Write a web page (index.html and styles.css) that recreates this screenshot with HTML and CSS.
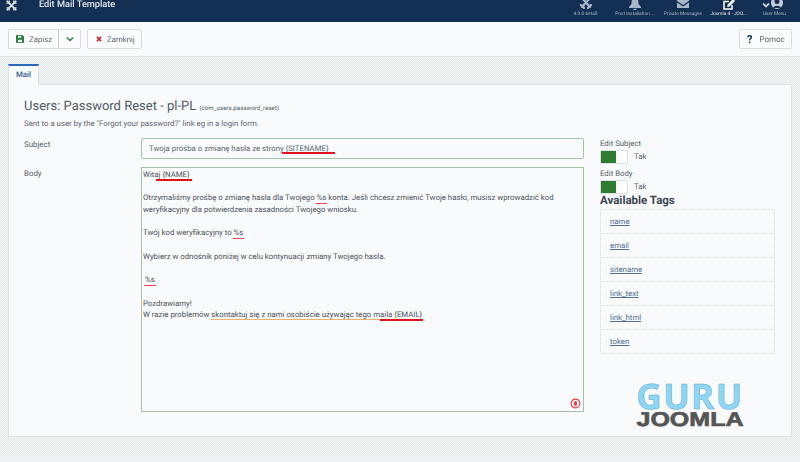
FILE: index.html
```html
<!DOCTYPE html>
<html lang="pl">
<head>
<meta charset="utf-8">
<title>Edit Mail Template</title>
<link rel="stylesheet" href="styles.css">
</head>
<body>
<div class="page">
<header class="topbar">
  <svg class="brand" viewBox="0 0 12 12"><path d="M1.500 1.500l9 9 M10.500 1.500l-9 9" stroke="#d5dde6" stroke-width="2.200" stroke-linecap="round" fill="none"/><path d="M3.500 1v2 M8.500 1v2 M1 3.500h2 M9 3.500h2 M1 8.500h2 M9 8.500h2 M3.500 9v2 M8.500 9v2" stroke="#d5dde6" stroke-width="1.400" stroke-linecap="round"/></svg>
  <h1 class="page-title">Edit Mail Template</h1>
  <nav class="quick">
    <div class="quick-item"><svg class="qi" viewBox="0 0 14 10"><path d="M3 -2l8 9 M11 -2l-8 9 M2 5l3 3 M12 5l-3 3" stroke="#aab7c7" stroke-width="2.200" stroke-linecap="round" fill="none"/></svg><span>4.0.0-beta5</span></div>
    <div class="quick-item"><svg class="qi" viewBox="0 0 14 10"><path d="M4 -2h6l.5 6 2.500 3v1H1V7l2.500-3z" fill="#aab7c7"/><path d="M5.500 8.800h3V10h-3z" fill="#aab7c7"/></svg><span>Post Installation ...</span></div>
    <div class="quick-item"><svg class="qi" viewBox="0 0 14 10"><path d="M1 -2h12v3L7 5 1 1z M1 2.500l6 4 6-4V8H1z" fill="#aab7c7"/></svg><span>Private Messages</span></div>
    <div class="quick-item bright"><svg class="qi" viewBox="0 0 14 10"><path d="M7 1.500H2V9h8V5" stroke="#fff" stroke-width="1.500" fill="none"/><path d="M5 7l.8-2.500L11-1l2 2-5.500 5.500z" fill="#fff"/></svg><span>Joomla 4 - JOO...</span></div>
    <div class="quick-item"><svg class="qi wide" viewBox="0 0 22 10"><path d="M1 3.500l3 3 3-3" stroke="#c3ccd8" stroke-width="1.800" fill="none"/><circle cx="15" cy="3" r="6" fill="#c3ccd8"/><circle cx="15" cy="1.500" r="2.500" fill="#132f53"/><path d="M11 8c1-3 7-3 8 0z" fill="#132f53"/></svg><span>User Menu</span></div>
  </nav>
</header>

<div class="toolbar">
  <div class="btn-group">
    <button class="btn btn-save"><svg class="ico" viewBox="0 0 10 10"><path d="M0 1a1 1 0 0 1 1-1h7l2 2v7a1 1 0 0 1-1 1H1a1 1 0 0 1-1-1z" fill="#2f7d43"/><rect x="2.500" y="1" width="4" height="2.500" fill="#e8f2ea"/><rect x="2.500" y="6" width="5" height="3" fill="#e8f2ea"/></svg>Zapisz</button>
    <button class="btn btn-caret"><svg class="ico" viewBox="0 0 10 8"><path d="M1 2l4 4 4-4" stroke="#2f7d43" stroke-width="1.800" fill="none"/></svg></button>
  </div>
  <button class="btn btn-close"><svg class="ico" viewBox="0 0 10 10"><path d="M1.500 1.500l7 7 M8.500 1.500l-7 7" stroke="#d0232b" stroke-width="2.600" fill="none"/></svg>Zamknij</button>
  <button class="btn btn-help"><span class="q">?</span>Pomoc</button>
</div>

<main class="content">
  <div class="tabs"><div class="tab">Mail</div></div>
  <section class="panel">
    <h2 class="mail-title">Users: Password Reset - pl-PL <small>(com_users.password_reset)</small></h2>
    <p class="desc">Sent to a user by the "Forgot your password?" link eg in a login form.</p>
    <div class="columns">
      <div class="fields">
        <div class="field-row subject-row">
          <label class="field-label">Subject</label>
          <div class="subject-input">Twoja prośba o zmianę hasła ze strony <span class="mark mark-site">{SITENAME}</span></div>
        </div>
        <div class="field-row">
          <label class="field-label">Body</label>
          <div class="body-area">
            <p>Witaj <span class="mark mark-name">{NAME}</span></p>
            <p>Otrzymaliśmy prośbę o zmianę hasła dla Twojego <span class="mark mark-thin">%s</span> konta. Jeśli chcesz zmienić Twoje hasło, musisz wprowadzić kod<br>weryfikacyjny dla potwierdzenia zasadności Twojego wniosku.</p>
            <p>Twój kod weryfikacyjny to <span class="mark mark-thin">%s</span></p>
            <p>Wybierz w odnośnik poniżej w celu kontynuacji zmiany Twojego hasła.</p>
            <p>&nbsp;<span class="mark mark-thin">%s</span></p>
            <p>Pozdrawiamy!<br>W razie problemów <span class="orange">skontaktuj się z nami osobiście używając tego maila</span> <span class="mark mark-mail">{EMAIL}</span></p>
            <svg class="badge" viewBox="0 0 12 12"><circle cx="6" cy="6" r="4.800" stroke="#e8343c" stroke-width="1.200" fill="none"/><rect x="4.500" y="3.500" width="3" height="5" rx="1" fill="#e8343c"/></svg>
          </div>
        </div>
      </div>
      <aside class="side">
        <div class="switch-label">Edit Subject</div>
        <div class="switch-row"><span class="switch"><span class="knob"></span></span><span>Tak</span></div>
        <div class="switch-label second">Edit Body</div>
        <div class="switch-row"><span class="switch"><span class="knob"></span></span><span>Tak</span></div>
        <h3 class="tags-title">Available Tags</h3>
        <ul class="tags">
          <li><a>name</a></li>
          <li><a>email</a></li>
          <li><a>sitename</a></li>
          <li><a>link_text</a></li>
          <li><a>link_html</a></li>
          <li><a>token</a></li>
        </ul>
      </aside>
    </div>
    <div class="logo"><div class="logo-guru">GURU</div><div class="logo-joomla">JOOMLA</div></div>
  </section>
</main>
</div>
</body>
</html>
```
FILE: styles.css
```css
* { box-sizing: border-box; }
html, body { margin: 0; padding: 0; }
body {
  width: 800px; height: 462px; overflow: hidden;
  background: #eceff2;
  font-family: Roboto, "Liberation Sans", sans-serif;
  font-size: 7.800px; color: #4a5560;
  text-rendering: geometricPrecision;
}
.page {
  width: 800px; height: 462px;
  background: repeating-conic-gradient(#e8ebee 0 25%, #f1f3f5 0 50%) 0 0 / 2px 2px;
  filter: blur(.3px);
}
.topbar { height: 22px; background: #132f53; display: flex; align-items: flex-start; }
.brand { width: 11px; height: 11px; margin: 0 0 0 6px; }
.page-title { margin: -1px 0 0 22px; font-size: 9.200px; line-height: 12px; font-weight: 500; color: #e4e9ef; }
.quick { margin-left: auto; display: flex; padding-right: 2px; }
.quick-item { width: 47px; display: flex; flex-direction: column; align-items: center; font-size: 4.800px; color: #a9b6c6; white-space: nowrap; }
.quick-item:nth-child(1) { width: 49px; }
.quick-item:nth-child(2) { width: 50px; }
.quick-item:nth-child(3) { width: 46px; }
.quick-item:nth-child(4) { width: 45px; }
.quick-item span { line-height: 6px; height: 6px; margin-top: 2px; }
.quick-item.bright { color: #e8edf3; }
.qi { width: 14px; height: 10px; display: block; overflow: hidden; }
.qi.wide { width: 22px; margin-left: -4px; }

.toolbar { height: 35px; background: #f9fafc; display: flex; align-items: flex-start; padding: 7px 8px 0; border-bottom: 1px solid #e4e7ea; }
.btn { height: 20px; background: #fbfcfd; border: 1px solid #d9dde1; border-radius: 2px; font: 7.800px Roboto, sans-serif; color: #5c6670; padding: 0; display: flex; align-items: center; text-rendering: geometricPrecision; }
.btn-group { display: flex; }
.btn-save { width: 50px; padding-left: 7px; border-right: 0; border-radius: 2px 0 0 2px; }
.btn-caret { width: 23px; border-radius: 0 2px 2px 0; justify-content: center; border-left: 1px solid #c5cad0; }
.btn-close { width: 55px; margin-left: 6px; padding-left: 8px; }
.btn-help { width: 53px; margin-left: auto; padding-left: 7px; font-size: 8px; }
.ico { width: 8px; height: 8px; margin-right: 5px; flex: none; }
.btn-close .ico { width: 6px; height: 6px; }
.btn-caret .ico { margin: 0; }
.q { font-size: 11px; font-weight: 700; color: #132f53; margin-right: 7px; }

.content { padding: 7px 8px 0; }
.tabs { height: 20px; display: flex; }
.tab { width: 31px; height: 21px; background: #f9fafc; border: 1px solid #dde1e5; border-top: 2px solid #2a69b8; border-bottom: 0; font-weight: 500; color: #31608f; text-align: center; line-height: 18px; position: relative; z-index: 1; }
.panel { height: 353px; background: #f9fafc; border: 1px solid #dde1e5; padding: 13px 15px 0; position: relative; }
.mail-title { margin: 0; font-size: 13px; line-height: 17px; font-weight: 400; color: #4f5a65; }
.mail-title small { font-size: 6.200px; }
.desc { margin: 1px 0 0; font-size: 7.800px; line-height: 11px; color: #5c6670; }
.columns { display: flex; margin-top: 9px; }
.fields { width: 560px; }
.field-row { display: flex; }
.subject-row { margin-bottom: 8px; }
.field-label { width: 117px; flex: none; font-size: 7.900px; color: #55606b; padding-top: 2px; }
.subject-input { width: 443px; height: 21px; border: 1px solid #a3c3a3; border-radius: 2px; padding: 0 7px; line-height: 20px; font-size: 7.800px; color: #5c6670; }
.body-area { width: 443px; height: 245px; border: 1px solid #a3c3a3; padding: 1px 1px 0; font-size: 7.800px; line-height: 11.700px; color: #4a525a; position: relative; }
.body-area p { margin: 0 0 11.700px; }
.mark { position: relative; }
.mark::after { content: ""; position: absolute; left: -1px; right: -1px; bottom: -2px; height: 2px; background: #e0121c; }
.mark-site::after { left: -4px; right: -6px; bottom: -1px; }
.mark-name::after { left: -6px; right: -2px; bottom: -2px; }
.mark-mail::after { left: -14px; right: -1px; bottom: -2px; }
.mark-thin::after { height: 1px; background: #f0404a; }
.orange { border-bottom: 1px solid #e9b36a; }
.badge { position: absolute; right: 2px; bottom: 2px; width: 11px; height: 11px; }

.side { width: 175px; margin-left: 16px; font-size: 7.800px; color: #55606b; }
.switch-label { line-height: 11px; }
.switch-label.second { margin-top: 4px; }
.switch-row { display: flex; align-items: center; gap: 6px; height: 15px; }
.switch { width: 28px; height: 14px; background: #fff; border: 1px solid #dde1e5; border-radius: 2px; display: block; }
.knob { display: block; width: 15px; height: 12px; background: #2e7d32; }
.tags-title { margin: 0; font-size: 11.500px; line-height: 12px; font-weight: 700; color: #3c4650; }
.tags { list-style: none; margin: 3px 0 0; padding: 0; border: 1px dotted #d3d8dd; }
.tags li { height: 24px; padding-left: 9px; line-height: 23px; border-bottom: 1px dotted #d3d8dd; }
.tags li:last-child { border-bottom: 0; height: 23px; }
.tags a { color: #4d6f91; text-decoration: underline; }

.logo { position: absolute; left: 627px; top: 297px; width: 108px; text-align: center; }
.logo-guru { font: 700 35px/30px "Open Sans", sans-serif; color: #8dd6f5; -webkit-text-stroke: .5px #6aa7c4; letter-spacing: 1.500px; white-space: nowrap; }
.logo-joomla { font: 700 20px/17px "Liberation Sans", sans-serif; color: #555; -webkit-text-stroke: .7px #555; transform: scaleX(1.25); }
```
